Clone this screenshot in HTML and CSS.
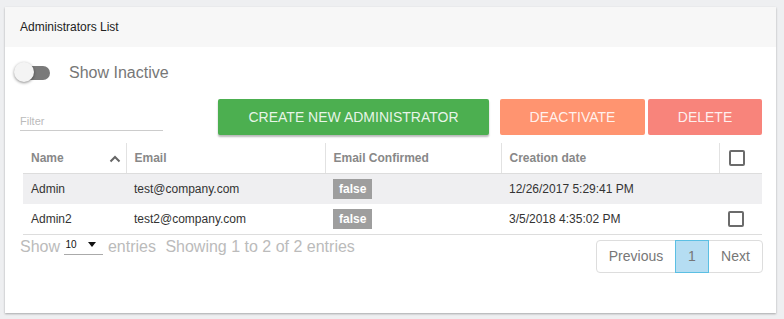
FILE: index.html
```html
<!DOCTYPE html>
<html lang="en">
<head>
<meta charset="UTF-8" />
<title>Administrators List</title>
<link rel="stylesheet" href="styles.css">
</head>
<body>
<div class="card">
  <div class="card-header">Administrators List</div>
  <div class="card-body">
    <!-- toggle -->
    <div class="toggle-row">
      <span class="toggle"><span class="track"></span><span class="knob"></span></span>
      <span class="toggle-label">Show Inactive</span>
    </div>

    <!-- filter + actions -->
    <div class="controls">
      <input class="filter" type="text" placeholder="Filter">
      <button class="btn btn-create">Create new administrator</button>
      <button class="btn btn-deactivate">Deactivate</button>
      <button class="btn btn-delete">Delete</button>
    </div>

    <table class="admins">
      <thead>
        <tr>
          <th class="col-name">Name
            <svg class="sort" width="12" height="8" viewBox="0 0 12 8"><path d="M1.5 6.5 L6 2 L10.5 6.5" fill="none" stroke="#666" stroke-width="2"/></svg>
          </th>
          <th class="col-email">Email</th>
          <th class="col-conf">Email Confirmed</th>
          <th class="col-date">Creation date</th>
          <th class="col-check"><span class="checkbox"></span></th>
        </tr>
      </thead>
      <tbody>
        <tr class="odd">
          <td>Admin</td>
          <td>test@company.com</td>
          <td><span class="tag">false</span></td>
          <td>12/26/2017 5:29:41 PM</td>
          <td></td>
        </tr>
        <tr>
          <td>Admin2</td>
          <td>test2@company.com</td>
          <td><span class="tag">false</span></td>
          <td>3/5/2018 4:35:02 PM</td>
          <td><span class="checkbox"></span></td>
        </tr>
      </tbody>
    </table>

    <div class="table-footer">
      <div class="info">
        Show
        <span class="select"><span class="select-val">10</span><span class="select-caret"></span></span>
        entries
        <span class="count">Showing 1 to 2 of 2 entries</span>
      </div>
      <div class="pager">
        <a class="page">Previous</a>
        <a class="page active">1</a>
        <a class="page">Next</a>
      </div>
    </div>
  </div>
</div>
</body>
</html>
```

FILE: styles.css
```css
body {
  margin: 0;
  background: #eeeff1;
  font-family: "Liberation Sans", Arial, sans-serif;
  color: #333;
}

.card {
  margin: 7px 8px 6px 5px;
  height: 306px;
  background: #fff;
  box-shadow: 0 1px 2px rgba(0,0,0,0.3);
  box-sizing: border-box;
}
.card-header {
  height: 40px; line-height: 40px;
  padding-left: 15px;
  background: #f7f7f7;
  font-size: 12px; color: #222;
}
.card-body {
  padding: 0 13px 0 15px;
}

/* toggle */
.toggle-row {
  display: flex; align-items: center;
  padding-top: 15px;
  height: 22px;
}
.toggle {
  position: relative;
  width: 36px; height: 22px;
  margin-left: -6px;
  flex: none;
}
.toggle .track {
  position: absolute; left: 1px; top: 4px;
  width: 35px; height: 14px; border-radius: 7px;
  background: #7a7a7a;
}
.toggle .knob {
  position: absolute; left: 0; top: 0;
  width: 20px; height: 20px; border-radius: 50%;
  background: #f4f4f4;
  box-shadow: 0 1px 3px rgba(0,0,0,0.45);
}
.toggle-label {
  margin-left: 19px;
  font-size: 16px; color: #777;
}

/* controls */
.controls {
  display: flex; align-items: flex-end;
  margin-top: 15px;
  height: 36px;
}
.filter {
  width: 143px; height: 18px;
  margin: 0 55px 4px 0; padding: 0;
  border: none; border-bottom: 1px solid #ccc;
  font: 11px "Liberation Sans", Arial, sans-serif;
  outline: none;
}
.filter::placeholder { color: #bbb; }

.btn {
  height: 36px;
  border: none; border-radius: 2px;
  font: 14px "Liberation Sans", Arial, sans-serif;
  text-transform: uppercase;
  color: rgba(255,255,255,0.88);
  padding: 0;
}
.btn-create {
  width: 271px; margin-right: 11px;
  background: #4caf50;
  box-shadow: 0 2px 2px rgba(0,0,0,0.28);
}
.btn-deactivate {
  width: 145px; margin-right: 3px;
  background: #ff9470;
}
.btn-delete {
  width: 114px;
  background: #f8847b;
}

/* table */
.admins {
  margin: 8px 0 0 3px;
  width: 739px;
  border-collapse: collapse;
  font-size: 12px;
}
.admins th {
  height: 30px; padding: 0 0 0 8px;
  text-align: left; font-weight: bold; color: #888;
  border-bottom: 1px solid #ddd;
  border-left: 1px solid #e2e2e2;
  box-sizing: border-box;
}
.admins th:first-child { border-left: none; }
.col-name { width: 103px; position: relative; }
.col-email { width: 199px; }
.col-conf { width: 176px; }
.col-date { width: 218px; }
.col-check { width: 43px; }
.sort {
  position: absolute; right: 5px; top: 12px;
}
.admins td {
  height: 30px; padding: 0 0 0 8px;
  color: #333;
}
.admins tbody tr:last-child td { border-bottom: 1px solid #ddd; }
.admins tr.odd td { background: #efeff1; }
.tag {
  display: inline-block;
  height: 20px; line-height: 20px;
  padding: 0 6px;
  background: #9e9e9e; color: #fff;
  font-weight: bold; font-size: 12px;
}
.checkbox {
  display: block;
  width: 16px; height: 16px; margin-left: 1px;
  border: 2px solid #6b6b6b; border-radius: 2px;
  box-sizing: border-box;
}

/* footer */
.table-footer {
  display: flex; justify-content: space-between; align-items: flex-start;
}
.info {
  line-height: 24px;
  font-size: 16px; color: #bbb;
}
.select {
  display: inline-block;
  width: 39px; height: 18px;
  border-bottom: 1px solid #aaa;
  position: relative; vertical-align: -3px;
}
.select-val {
  position: absolute; left: 1px; top: -3px;
  font-size: 10px; color: #111;
}
.select-caret {
  position: absolute; left: 24px; top: 6px;
  width: 0; height: 0;
  border-left: 4px solid transparent;
  border-right: 4px solid transparent;
  border-top: 5px solid #111;
}
.count { margin-left: 5px; }
.pager {
  display: flex;
  margin-top: 5px;
  border: 1px solid #ddd; border-radius: 4px;
  height: 31px;
}
.page {
  line-height: 31px;
  font-size: 14px; color: #777;
  text-align: center;
}
.page:first-child { width: 78px; }
.page.active {
  width: 32px;
  background: #b5ddf2;
  border: 1px solid #5bbfe3;
  margin: -1px 0;
  line-height: 31px;
}
.page:last-child { width: 53px; }
```
